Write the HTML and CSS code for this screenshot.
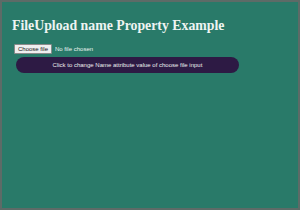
FILE: index.html
```html
<!DOCTYPE html>
<html lang="en">
<head>
  <meta charset="UTF-8" />
  <title>FileUpload name Property Example</title>
  <link rel="stylesheet" href="styles.css">
</head>
<body>
  <div class="page">
    <h1>FileUpload name Property Example</h1>
    <label class="file-field">
      <input type="file" id="fileInput" name="myFile">
      <span class="file-btn">Choose file</span>
      <span class="file-name">No file chosen</span>
    </label>
    <button class="change-btn" onclick="changeName()">Click to change Name attribute value of choose file input</button>
  </div>

  <script>
    function changeName() {
      document.getElementById("fileInput").name = "newFile";
    }
  </script>
</body>
</html>
```

FILE: styles.css
```css
* {
  margin: 0;
  padding: 0;
  box-sizing: border-box;
}

body {
  width: 300px;
  height: 210px;
  overflow: hidden;
}

.page {
  height: 210px;
  background: #297a69;
  border: 2px solid #5d6b67;
  padding: 16px 10px 0;
  color: #eef4f2;
}

h1 {
  font-family: "Liberation Serif", serif;
  font-size: 13.8px;
  font-weight: bold;
  line-height: 16px;
  margin-bottom: 10px;
}

.file-field {
  display: flex;
  align-items: center;
  gap: 3px;
  font-family: "Liberation Sans", sans-serif;
  font-size: 6px;
}

.file-field input {
  display: none;
}

.file-btn {
  background: #efefef;
  color: #111;
  border: 1px solid #8a8a8a;
  border-radius: 1px;
  padding: 1px 3px;
  line-height: 6px;
  margin-left: 2px;
}

.change-btn {
  display: block;
  width: 223px;
  height: 16px;
  margin: 3px 0 0 4px;
  background: #2d1a44;
  color: #eee;
  border: none;
  border-radius: 8px;
  font-family: "Liberation Sans", sans-serif;
  font-size: 6px;
}
```
